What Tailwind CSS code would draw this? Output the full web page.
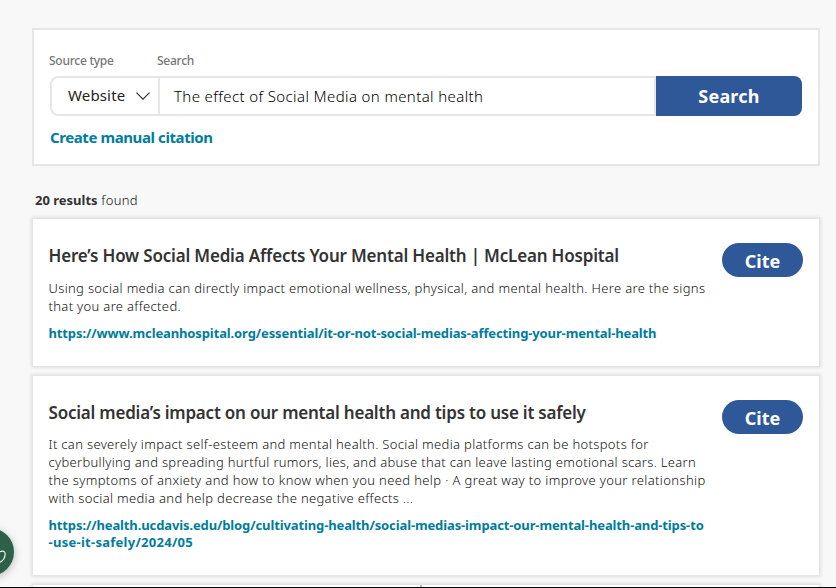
<!DOCTYPE html>
<html lang="en">
  <head>
    <meta charset="utf-8" />
    <meta content="width=device-width, initial-scale=1.0" name="viewport" />
    <title>Search results</title>
    <script src="https://cdn.jsdelivr.net/npm/@tailwindcss/browser@4"></script>
    <style>
      body {
        font-family: "Noto Sans", "Open Sans", sans-serif;
      }
    </style>
  </head>
  <body class="relative h-[588px] overflow-hidden bg-[#f8f8f8] text-[#333]">
    <main class="ml-8 w-[788px] pt-7">
      <!-- Search form -->
      <form class="h-[138px] border-2 border-[#e6e6e6] bg-white px-4 pt-[22px]">
        <div class="flex h-[18px] text-xs leading-[18px] font-medium tracking-[-0.25px] text-[#767676]">
          <label class="-ml-px w-[108px]">Source type</label>
          <label>Search</label>
        </div>
        <div class="mt-1.5 flex h-10">
          <button type="button" class="flex w-[108px] items-center rounded-l-lg border-2 border-r-0 border-[#e6e6e6] pl-4 text-[15px] text-[#222]">
            <span class="w-[68px] pb-0.5 text-left tracking-[0.15px] whitespace-nowrap">Website</span>
            <svg class="h-2 w-3.5" viewBox="0 0 14 8" fill="none" stroke="#333" stroke-width="1.2">
              <path d="M.5.7 7 7.2 13.500.7" />
            </svg>
          </button>
          <div class="flex w-[498px] items-center border-2 border-[#e6e6e6] pl-3.5 text-[15px] text-black">
            <span class="font-light tracking-[0.38px] whitespace-nowrap">The effect of Social Media on mental health</span>
          </div>
          <button type="button" class="w-[146px] rounded-r-lg bg-[#2f5899] text-lg font-bold tracking-[0.2px] text-white">Search</button>
        </div>
        <a class="mt-[11px] block text-[15px] leading-5 font-bold tracking-[-0.41px] text-[#007c9e]">Create manual citation</a>
      </form>

      <p class="mt-6 h-5 pl-[3px] text-[13px] leading-5 font-light tracking-[0.33px] text-[#111]"><b class="font-bold tracking-normal text-[#333]">20 results</b> found</p>

      <!-- Results -->
      <section class="mx-px mt-[9px] flex flex-col gap-2.5">
        <article class="flex h-[147px] justify-between bg-white pr-4 pl-4 shadow-[0_0_3px_2px_#e0e0e0]">
          <div class="-ml-[0.5px] pt-6 whitespace-nowrap">
            <h2 class="text-[17px] leading-[26px] font-semibold tracking-[-0.19px]">Here’s How Social Media Affects Your Mental Health | McLean Hospital</h2>
            <p class="mt-2.5 text-[13px] leading-[18px] font-light tracking-[0.335px] text-[#111]">Using social media can directly impact emotional wellness, physical, and mental health. Here are the signs<br />that you are affected.</p>
            <a class="mt-[9px] block text-[13px] leading-[18px] font-bold tracking-[-0.12px] text-[#007c9e]">https://www.mcleanhospital.org/essential/it-or-not-social-medias-affecting-your-mental-health</a>
          </div>
          <button class="mt-6 h-[34px] w-[81px] shrink-0 rounded-full bg-[#2f5899] pt-0.5 text-lg font-bold text-white">Cite</button>
        </article>
        <article class="flex h-[199px] justify-between bg-white pr-4 pl-4 shadow-[0_0_3px_2px_#e0e0e0]">
          <div class="-ml-[0.5px] pt-6 whitespace-nowrap">
            <h2 class="text-[17px] leading-[26px] font-semibold tracking-[-0.22px]">Social media’s impact on our mental health and tips to use it safely</h2>
            <p class="mt-[9px] text-[13px] leading-[18px] font-light tracking-[0.335px] text-[#111]">It can severely impact self-esteem and mental health. Social media platforms can be hotspots for<br /><span class="tracking-[0.31px]">cyberbullying and spreading hurtful rumors, lies, and abuse that can leave lasting emotional scars. Learn</span><br /><span class="tracking-[0.37px]">the symptoms of anxiety and how to know when you need help · A great way to improve your relationship</span><br />with social media and help decrease the negative effects ...</p>
            <a class="mt-2.5 block text-[13px] leading-[17px] font-bold tracking-[-0.12px] text-[#007c9e]">https://health.ucdavis.edu/blog/cultivating-health/social-medias-impact-our-mental-health-and-tips-to<br /><span class="tracking-[0.27px]">-use-it-safely/2024/05</span></a>
          </div>
          <button class="mt-6 h-[34px] w-[81px] shrink-0 rounded-full bg-[#2f5899] pt-0.5 text-lg font-bold text-white">Cite</button>
        </article>
        <article class="h-[3px] bg-white shadow-[0_0_3px_2px_#e0e0e0]"></article>
      </section>
    </main>

    <!-- Chat launcher, partly off screen -->
    <div class="absolute top-[528px] -left-[34px] size-12 rounded-full bg-[#2c6049] shadow-[0_2px_8px_#0004]">
      <svg class="absolute top-[22px] left-[30px] h-4 w-2.5" viewBox="0 0 10 16" fill="none" stroke="#fff" stroke-width="1.1">
        <path d="M4 1.800C6.500.6 9.200 1 9.200 4 9 8 6.500 11 4 12.200" />
      </svg>
    </div>
    <div class="absolute bottom-px left-[420px] h-0.5 w-0.5 bg-[#bbb]"></div>
    <div class="absolute bottom-0 left-0 h-px w-full bg-black"></div>
  </body>
</html>
